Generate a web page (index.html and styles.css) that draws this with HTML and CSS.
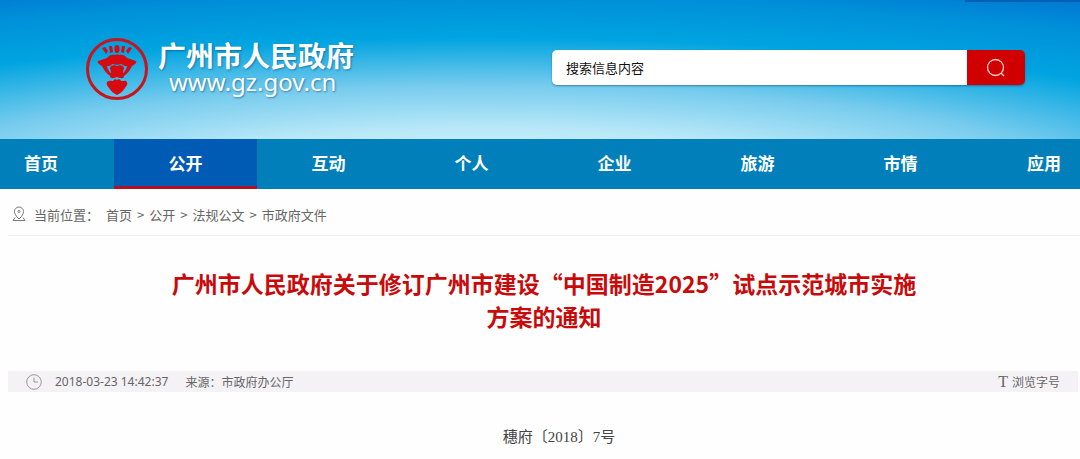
FILE: index.html
```html
<!DOCTYPE html>
<html lang="zh-CN">
<head>
  <meta charset="UTF-8" />
  <meta name="viewport" content="width=device-width, initial-scale=1" />
  <title>广州市人民政府</title>
  <link rel="stylesheet" href="styles.css">
</head>
<body>

<header class="site-header">
  <a class="brand" href="#">
    <svg class="brand-logo" viewBox="0 0 64 64" aria-hidden="true">
      <circle cx="32" cy="32" r="29.5" fill="none" stroke="#c8141c" stroke-width="3" />
      <g fill="#d60a10">
        <path d="M17 11l3-1 3 4-2 3z" />
        <path d="M24 9l3 0 1 6-3 1z" />
        <ellipse cx="32" cy="12" rx="2.6" ry="4" />
        <path d="M37 9l3 0-1 7-3-1z" />
        <path d="M44 10l3 1-4 6-2-3z" />
        <path d="M22 21c2-3 5-4 8-3 1-1 3-1 4 0 3-1 6 0 8 3l9 3c1 1 0 2-1 3l-3 2c-2 4-4 7-8 10l-2-1c2-3 5-6 5-9-2 0-4 0-5-2-3 1-7 1-10 0-1 2-3 2-5 2 0 3 3 6 5 9l-2 1c-4-3-6-6-8-10l-3-2c-1-1-2-2-1-3z" />
        <path d="M26 29c2-1 4-1 6 0 2-1 4-1 6 0l1 2-1 4 1 5c-2 2-4 1-7 0-3 1-5 2-7 0l1-5-1-4z" />
        <path d="M22 45c2-2 5-1 6-1 1-2 3-2 4-1 1-1 3-1 4 1 2 0 5-1 6 1 1 3-1 4-2 6-2 3-4 5-8 7-4-2-6-4-8-7-1-2-3-3-2-6z" />
      </g>
    </svg>
    <span class="brand-text">
      <span class="brand-name">广州市人民政府</span>
      <span class="brand-url">www.gz.gov.cn</span>
    </span>
  </a>
  <form class="search" role="search">
    <input class="search-input" type="text" name="q" value="搜索信息内容" aria-label="搜索信息内容" />
    <button class="search-btn" type="submit" aria-label="搜索">
      <svg class="search-icon" viewBox="0 0 20 20" aria-hidden="true">
        <circle cx="9.5" cy="9.5" r="8" />
        <path d="M15 15l3 3" />
      </svg>
    </button>
  </form>
</header>

<nav class="main-nav">
  <a href="#">首页</a>
  <a class="active" href="#">公开</a>
  <a href="#">互动</a>
  <a href="#">个人</a>
  <a href="#">企业</a>
  <a href="#">旅游</a>
  <a href="#">市情</a>
  <a href="#">应用</a>
</nav>

<main class="content">
  <div class="breadcrumb">
    <svg class="pin-icon" viewBox="0 0 14 16" aria-hidden="true">
      <path d="M7 13C4 10 2.500 8 2.500 5.500a4.500 4.500 0 0 1 9 0C11.500 8 10 10 7 13z" />
      <circle cx="7" cy="5.500" r="1" />
      <path d="M3 11.500L1 14.500h12l-2-3" />
    </svg>
    <span class="breadcrumb-label">当前位置：</span>
    <a href="#">首页</a>
    <span>&gt;</span>
    <a href="#">公开</a>
    <span>&gt;</span>
    <a href="#">法规公文</a>
    <span>&gt;</span>
    <a href="#">市政府文件</a>
  </div>

  <h1 class="title">广州市人民政府关于修订广州市建设“中国制造2025”试点示范城市实施方案的通知</h1>

  <div class="meta">
    <svg class="clock-icon" viewBox="0 0 16 16" aria-hidden="true">
      <circle cx="8" cy="8" r="7.300" />
      <path d="M8 3.500V8h4" />
    </svg>
    <time class="meta-date">2018-03-23 14:42:37</time>
    <span>来源：市政府办公厅</span>
    <button class="font-size-btn" type="button"><span class="font-size-mark">T</span>浏览字号</button>
  </div>

  <p class="doc-number">穗府〔2018〕7号</p>
</main>

</body>
</html>
```
FILE: styles.css
```css
* {
  box-sizing: border-box;
}
body {
  margin: 0;
  background: #fefefe;
  color: #666;
  font-family: "Noto Sans CJK SC", "Noto Sans", sans-serif;
  font-size: 13px;
  overflow-x: hidden;
}
a {
  color: inherit;
  text-decoration: none;
}

/* header */
.site-header {
  display: flex;
  align-items: center;
  justify-content: space-between;
  padding: 37px 55px 38px 85px;
  background:
    linear-gradient(#0060b4, #0060b4) right top / 115px 2px no-repeat,
    radial-gradient(ellipse 1650px 300px at 45% 200px, #c8eefa 18%, #b8e8f8 24%, #78ccee 38%, #00a4e0 54%, #0092da 66%, #0072d0 78%);
}
.brand {
  display: flex;
  align-items: center;
  gap: 9px;
  color: #fff;
}
.brand-logo {
  width: 64px;
  height: 64px;
}
.brand-text {
  display: flex;
  flex-direction: column;
  padding-bottom: 4px;
  text-shadow: 1px 1px 2px rgba(0, 60, 110, 0.5);
}
.brand-name {
  font-size: 28px;
  font-weight: bold;
  line-height: 30px;
}
.brand-url {
  padding-left: 11px;
  font-family: "Noto Sans", sans-serif;
  font-size: 24px;
  line-height: 24px;
}
.search {
  display: flex;
  width: 473px;
  height: 35px;
  margin-bottom: 3px;
  border-radius: 5px;
  overflow: hidden;
  box-shadow: 0 1px 2px rgba(0, 60, 110, 0.5);
}
.search-input {
  flex: 1;
  min-width: 0;
  padding: 0 14px;
  border: none;
  background: #fff;
  color: #111;
  font-family: inherit;
  font-size: 13px;
}
.search-btn {
  display: flex;
  align-items: center;
  justify-content: center;
  width: 58px;
  padding: 0;
  border: none;
  background: #d00000;
  cursor: pointer;
}
.search-icon {
  width: 20px;
  height: 20px;
  fill: none;
  stroke: #ffd0d0;
  stroke-width: 1.3;
}

/* navigation */
.main-nav {
  display: grid;
  grid-template-columns: 114px repeat(6, 1fr) 108px;
  background: #007fba;
  color: #fff;
  font-size: 17px;
  font-weight: bold;
  line-height: 47px;
  text-align: center;
}
.main-nav a {
  border-bottom: 3px solid transparent;
}
.main-nav a:first-child {
  padding-left: 24px;
  text-align: left;
}
.main-nav a:last-child {
  padding-right: 19px;
  text-align: right;
}
.main-nav .active {
  background: #005bb5;
  border-bottom-color: #b01020;
}

/* article */
.content {
  padding-left: 8px;
}
.breadcrumb {
  display: flex;
  align-items: center;
  gap: 5px;
  height: 47px;
  padding: 4px 4px 0;
  border-bottom: 1px solid #eee;
}
.breadcrumb-label {
  padding: 0 2px 0 3px;
}
.pin-icon {
  width: 14px;
  height: 16px;
  fill: none;
  stroke: #777;
}
.title {
  max-width: 760px;
  margin: 31px auto 38px;
  color: #c80a0a;
  font-size: 23px;
  line-height: 33px;
  text-align: center;
}
.meta {
  display: flex;
  align-items: center;
  height: 21px;
  margin-right: 2px;
  padding: 0 18px;
  background: #f4f2f5;
  font-size: 12px;
}
.clock-icon {
  width: 16px;
  height: 16px;
  fill: none;
  stroke: #999;
}
.meta-date {
  padding: 0 17px 0 13px;
  font-family: "Noto Sans", sans-serif;
}
.font-size-btn {
  display: flex;
  align-items: center;
  gap: 4px;
  margin-left: auto;
  padding: 0;
  border: none;
  background: none;
  color: inherit;
  font-family: inherit;
  font-size: 12px;
  cursor: pointer;
}
.font-size-mark {
  font-family: "Liberation Serif", serif;
  font-size: 16px;
}
.doc-number {
  margin: 34px 0 12px;
  color: #444;
  font-family: "Liberation Serif", "Noto Sans CJK SC", serif;
  font-size: 15px;
  line-height: 23px;
  text-align: center;
  text-indent: 2em;
}
```
